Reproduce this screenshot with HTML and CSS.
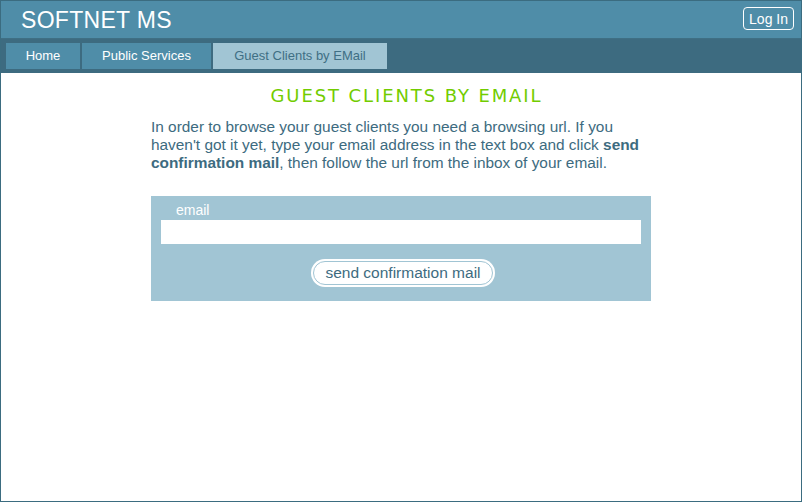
FILE: index.html
```html
<!DOCTYPE html>
<html>
<head>
<meta charset="utf-8">
<link rel="stylesheet" href="styles.css">
</head>
<body>
<div class="page">
  <header class="header">
    <div class="brand">SOFTNET MS</div>
    <button class="login">Log In</button>
  </header>
  <nav class="nav">
    <a class="tab">Home</a>
    <a class="tab tab-wide">Public Services</a>
    <a class="tab tab-active">Guest Clients by EMail</a>
  </nav>
  <main class="content">
    <h1 class="title">GUEST CLIENTS BY EMAIL</h1>
    <p class="intro">In order to browse your guest clients you need a browsing url. If you haven't got it yet, type your email address in the text box and click <b>send confirmation mail</b>, then follow the url from the inbox of your email.</p>
    <form class="box">
      <label class="label">email</label>
      <input class="input" type="text">
      <div class="actions">
        <button class="send" type="button">send confirmation mail</button>
      </div>
    </form>
  </main>
</div>
</body>
</html>
```
FILE: styles.css
```css
html, body {
  margin: 0;
  padding: 0;
  height: 100%;
}
body {
  font-family: "Liberation Sans", Arial, sans-serif;
  background: #ffffff;
}
.page {
  box-sizing: border-box;
  height: 502px;
  border: 1px solid #3b6c80;
  display: flex;
  flex-direction: column;
}
.header {
  background: #4f8da8;
  height: 37px;
  display: flex;
  align-items: center;
  justify-content: space-between;
  padding: 0 7px 0 20px;
  border-bottom: 1px solid #3f6f84;
}
.brand {
  color: #ffffff;
  font-size: 23px;
  letter-spacing: 0.3px;
  padding-top: 1px;
}
.login {
  font-family: "Liberation Sans", Arial, sans-serif;
  font-size: 14px;
  color: #ffffff;
  background: transparent;
  border: 1px solid #ffffff;
  border-radius: 4px;
  height: 23px;
  padding: 0 5px;
  margin-top: -2px;
}
.nav {
  background: #3d6b80;
  height: 34px;
  display: flex;
  align-items: flex-start;
  gap: 2px;
  padding: 4px 0 0 5px;
  box-sizing: border-box;
}
.tab {
  height: 26px;
  line-height: 26px;
  background: #4f8da8;
  color: #ffffff;
  font-size: 13px;
  text-align: center;
  width: 74px;
}
.tab-wide { width: 129px; }
.tab-active {
  width: 174px;
  background: #a1c5d4;
  color: #3f6f84;
}
.content {
  flex: 1;
  display: flex;
  flex-direction: column;
  align-items: center;
}
.title {
  margin: 12px 0 0 11px;
  font-family: "DejaVu Sans", Verdana, sans-serif;
  font-weight: normal;
  font-size: 18px;
  letter-spacing: 1.9px;
  color: #72cc00;
  line-height: 22px;
}
.intro {
  width: 500px;
  margin: 11px 0 0 0;
  font-size: 15.4px;
  line-height: 18px;
  color: #3d6b80;
}
.intro b { font-weight: bold; }
.box {
  width: 500px;
  box-sizing: border-box;
  margin: 24px 0 0 0;
  background: #a1c5d4;
  padding: 6px 10px 15px 10px;
  display: flex;
  flex-direction: column;
}
.label {
  color: #ffffff;
  font-size: 14px;
  line-height: 16px;
  padding-left: 15px;
  margin-bottom: 2px;
}
.input {
  box-sizing: border-box;
  width: 480px;
  height: 24px;
  border: none;
  background: #ffffff;
  margin: 0;
}
.actions {
  display: flex;
  justify-content: center;
  margin-top: 16px;
}
.send {
  font-family: "Liberation Sans", Arial, sans-serif;
  font-size: 15.5px;
  color: #3d6b80;
  background: #ffffff;
  border: 1px solid #a1c5d4;
  box-shadow: 0 0 0 2px #ffffff;
  border-radius: 13px;
  height: 24px;
  width: 180px;
  padding: 0;
  margin: 1px 0 1px 4px;
}
```
